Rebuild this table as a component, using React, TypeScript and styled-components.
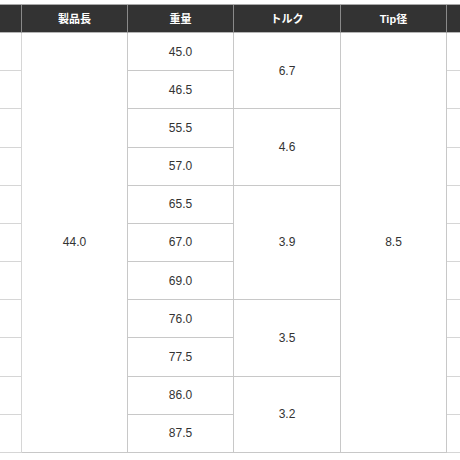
import styled, { createGlobalStyle } from "styled-components";

const GlobalStyle = createGlobalStyle`
  html, body {
    margin: 0;
    padding: 0;
    background: #ffffff;
    overflow: hidden;
  }
  body {
    font-family: "Liberation Sans", "Noto Sans CJK JP", Arial, sans-serif;
  }
`;

const weights = ["45.0", "46.5", "55.5", "57.0", "65.5", "67.0", "69.0", "76.0", "77.5", "86.0", "87.5"];

const torques = [
  { value: "6.7", start: 1, span: 2 },
  { value: "4.6", start: 3, span: 2 },
  { value: "3.9", start: 5, span: 3 },
  { value: "3.5", start: 8, span: 2 },
  { value: "3.2", start: 10, span: 2 },
];

const headers = ["", "製品長", "重量", "トルク", "Tip径", ""];

function App() {
  return (
    <>
      <GlobalStyle />
      <Frame>
        <SpecTable>
          {headers.map((label, i) => (
            <HeadCell key={i} $col={i + 1}>
              {label}
            </HeadCell>
          ))}

          {weights.map((_, r) => (
            <Cell key={"l" + r} $col={1} $row={r + 2} $faint />
          ))}

          <Cell $col={2} $row={2} $span={11}>
            44.0
          </Cell>

          {weights.map((w, r) => (
            <Cell key={"w" + r} $col={3} $row={r + 2}>
              {w}
            </Cell>
          ))}

          {torques.map((t) => (
            <Cell key={t.value} $col={4} $row={t.start + 1} $span={t.span}>
              {t.value}
            </Cell>
          ))}

          <Cell $col={5} $row={2} $span={11}>
            8.5
          </Cell>

          {weights.map((_, r) => (
            <Cell key={"r" + r} $col={6} $row={r + 2} $faint />
          ))}
        </SpecTable>
      </Frame>
    </>
  );
}

export default App;

const Frame = styled.div`
  width: 460px;
  height: 460px;
  overflow: hidden;
`;

const SpecTable = styled.div`
  display: grid;
  grid-template-columns: 106px 106px 106px 107px 106px 106px;
  grid-template-rows: 28px repeat(11, 38.18px);
  width: max-content;
  margin: 4px 0 0 -84px;
  border-top: 1px solid #a9a9a9;
`;

const HeadCell = styled.div<{ $col: number }>`
  grid-column: ${(p) => p.$col};
  grid-row: 1;
  box-sizing: border-box;
  display: flex;
  align-items: center;
  justify-content: center;
  background: #333333;
  color: #ffffff;
  font-size: 11px;
  font-weight: bold;
  border-right: 1px solid #8a8a8a;
  border-bottom: 1px solid #b5b5b5;
  padding-bottom: 1px;
`;

const Cell = styled.div<{ $col: number; $row: number; $span?: number; $faint?: boolean }>`
  grid-column: ${(p) => p.$col};
  grid-row: ${(p) => p.$row} / span ${(p) => p.$span ?? 1};
  box-sizing: border-box;
  display: flex;
  align-items: center;
  justify-content: center;
  color: #333333;
  font-size: 12px;
  border-right: 1px solid ${(p) => (p.$faint ? "#d6d6d6" : "#c8c8c8")};
  border-bottom: 1px solid ${(p) => (p.$faint ? "#d6d6d6" : "#c8c8c8")};
`;
